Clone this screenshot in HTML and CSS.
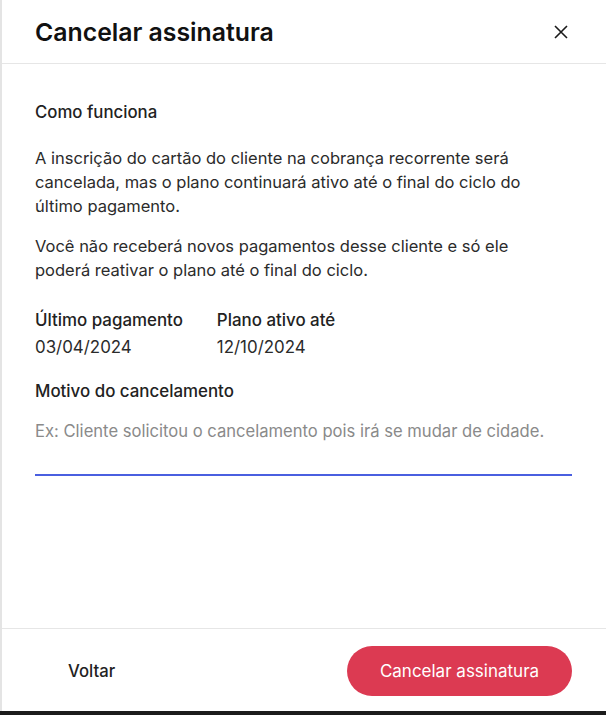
FILE: index.html
```html
<!DOCTYPE html>
<html lang="pt-BR">
<head>
    <meta charset="UTF-8">
    <meta name="viewport" content="width=device-width, initial-scale=1.0">
    <title>Cancelar assinatura</title>
    <link rel="stylesheet" href="styles.css">
</head>
<body>
    <div class="modal">
        <header class="modal-header">
            <h1>Cancelar assinatura</h1>
            <button class="close-btn" aria-label="Fechar">
                <svg width="16" height="16" viewBox="0 0 16 16">
                    <path d="M2 2 L14 14 M14 2 L2 14" stroke="#1a1a1a" stroke-width="1.6" fill="none"/>
                </svg>
            </button>
        </header>

        <div class="modal-body">
            <h3>Como funciona</h3>
            <p>A inscrição do cartão do cliente na cobrança recorrente será cancelada, mas o plano continuará ativo até o final do ciclo do último pagamento.</p>
            <p>Você não receberá novos pagamentos desse cliente e só ele poderá reativar o plano até o final do ciclo.</p>

            <div class="info-row">
                <div class="info">
                    <span class="info-label">Último pagamento</span>
                    <span class="info-value">03/04/2024</span>
                </div>
                <div class="info">
                    <span class="info-label">Plano ativo até</span>
                    <span class="info-value">12/10/2024</span>
                </div>
            </div>

            <label class="reason-label" for="reason">Motivo do cancelamento</label>
            <textarea id="reason" class="reason" placeholder="Ex: Cliente solicitou o cancelamento pois irá se mudar de cidade."></textarea>
        </div>

        <footer class="modal-footer">
            <button class="back-btn">Voltar</button>
            <button class="cancel-btn">Cancelar assinatura</button>
        </footer>
    </div>
</body>
</html>
```

FILE: styles.css
```css
body {
    margin: 0;
    background-color: #1c1c1c;
    font-family: Inter, 'Noto Sans', sans-serif;
    color: #2b2b2b;
}
.modal {
    width: 604px;
    height: 711px;
    background-color: white;
    border-left: 2px solid #e4e4e4;
    display: flex;
    flex-direction: column;
}
.modal-header {
    height: 64px;
    border-bottom: 1px solid #e6e6e6;
    display: flex;
    align-items: center;
    justify-content: space-between;
    padding: 0 33px 0 33px;
    box-sizing: border-box;
}
.modal-header h1 {
    margin: 0;
    font-size: 24.8px;
    font-weight: 600;
    color: #111;
}
.close-btn {
    background: none;
    border: none;
    padding: 4px;
    cursor: pointer;
    display: flex;
}
.modal-body {
    flex: 1;
    padding: 36px 34px 0 33px;
}
.modal-body h3 {
    margin: 0 0 22px;
    font-size: 16.8px;
    font-weight: 500;
    line-height: 24px;
    color: #222;
}
.modal-body p {
    max-width: 498px;
    margin: 0 0 16px;
    font-size: 16.5px;
    line-height: 24px;
}
.info-row {
    display: flex;
    gap: 34px;
    margin-top: 26px;
}
.info {
    display: flex;
    flex-direction: column;
    gap: 3px;
}
.info-label {
    font-size: 16.9px;
    font-weight: 500;
    line-height: 24px;
    color: #222;
}
.info-value {
    font-size: 16.9px;
    line-height: 24px;
}
.reason-label {
    display: block;
    margin-top: 20px;
    font-size: 16.9px;
    font-weight: 500;
    line-height: 24px;
    color: #222;
}
.reason {
    display: block;
    width: 100%;
    height: 64px;
    box-sizing: border-box;
    margin-top: 9px;
    padding: 7px 0 0;
    border: none;
    border-bottom: 2px solid #4a5fe0;
    font-family: inherit;
    font-size: 16.6px;
    line-height: 24px;
    color: #2b2b2b;
    outline: none;
    resize: none;
}
.reason::placeholder {
    color: #8a8a8a;
}
.modal-footer {
    border-top: 1px solid #e6e6e6;
    padding: 17px 34px 15px 33px;
    display: flex;
    align-items: center;
    justify-content: space-between;
}
.back-btn {
    background: none;
    border: none;
    padding: 0 33px;
    font-family: inherit;
    font-size: 16.7px;
    font-weight: 500;
    color: #222;
    cursor: pointer;
}
.cancel-btn {
    background-color: #dc3a52;
    color: white;
    border: none;
    height: 50px;
    width: 225px;
    border-radius: 25px;
    font-family: inherit;
    font-size: 17px;
    cursor: pointer;
}
```
